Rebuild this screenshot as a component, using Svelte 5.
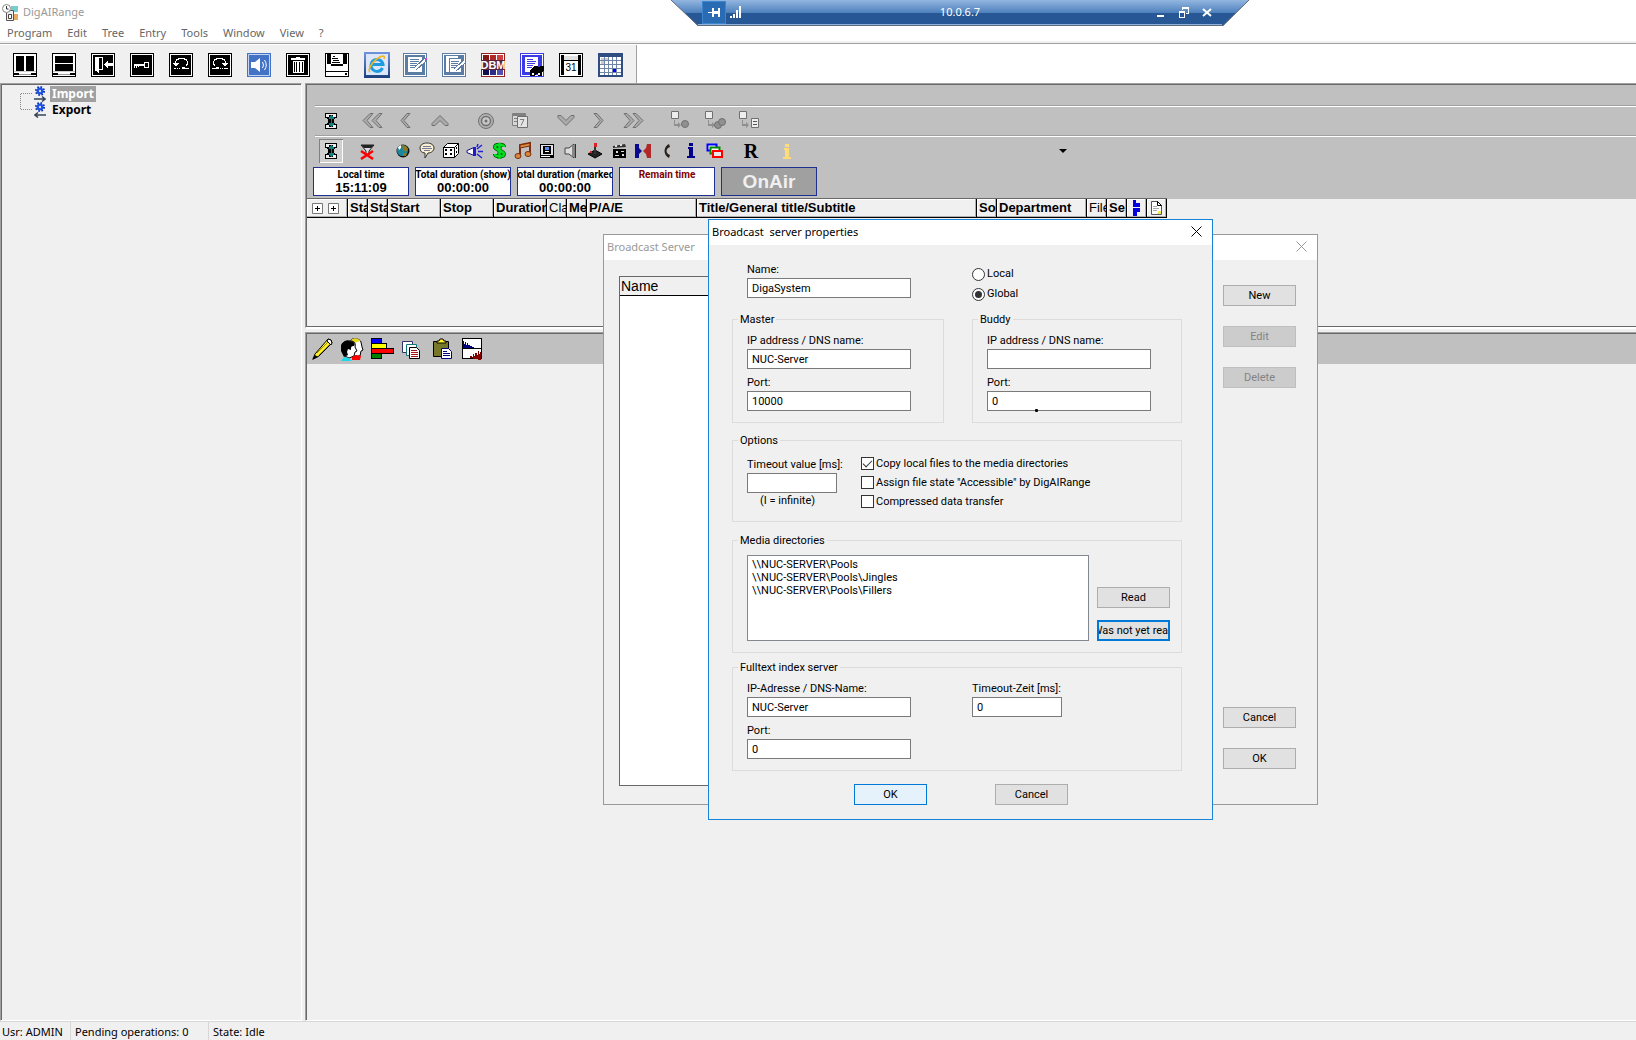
<script>
  const menus = ['Program', 'Edit', 'Tree', 'Entry', 'Tools', 'Window', 'View', '?'];

  // square tile with a thin white inner frame
  const tile = (c) => `<path d="M0 0h24v24H0z" fill="${c}"/><path d="M1.500 1.500h21v21h-21z" fill="none" stroke="#fff"/>`;

  const mainTools = [
    { name: 'Split vertical', art: '<path d="M0 0h24v24H0z"/><path d="M1 1h22v22H1z" fill="#fff"/><path d="M3 3h8v15H3zM13 3h8v15h-8zM1 20h5v2H1zM18 20h5v2h-5z"/><path d="M6 21h12v1H6z" fill="#999"/><path d="M1 18h22v1H1z" fill="#ccc"/>' },
    { name: 'Split horizontal', art: '<path d="M0 0h24v24H0z"/><path d="M1 1h22v22H1z" fill="#fff"/><path d="M3 3h18v7H3zM3 11h18v7H3zM1 20h5v2H1zM18 20h5v2h-5z"/><path d="M6 21h12v1H6z" fill="#999"/><path d="M1 18h22v1H1z" fill="#ccc"/>' },
    { name: 'Exit', art: tile('#000') + '<path d="M4 4h8v13H8v3H7v-1H6v-1H4z" fill="#fff"/><path d="M8 5h3v11H8z" fill="#000"/><path d="M13 11h1v-1h1V9h1V8h1v2h5v3h-5v2h-1v-1h-1v-1h-1v-1h-1z" fill="#fff"/>' },
    { name: 'Login', art: tile('#000') + '<path d="M4 11h10v2H9v1H8v-1H7v2H6v-2H5v2H4z" fill="#fff"/><path d="M14.500 9.500h4v5h-4z" fill="none" stroke="#fff"/>' },
    { name: 'Undo', art: tile('#000') + '<path d="M6 10V8h1V6h2V5h7v1h2v2h1v4h-1v1h-2v2h4v1h-7v-2h3v-1h1v-2h1V8h-1V7h-2V6h-5v1H8v1H7v2h3v1H9v1H8v1H6v-1H5v-1H4v-1zM5 15h2v1H5zM8 15h1v1H8zM10 15h1v1h-1z" fill="#fff"/>' },
    { name: 'Redo', art: tile('#000') + '<path d="M18 10V8h-1V6h-2V5H8v1H6v2H5v4h1v1h2v2H4v1h7v-2H8v-1H7v-2H6V8h1V7h2V6h5v1h2v1h1v2h-3v1h1v1h1v1h2v-1h1v-1h1v-1zM12 15h1v1h-1zM14 15h1v1h-1zM16 15h4v1h-4z" fill="#fff"/>' },
    { name: 'Sound', art: '<path d="M0 0h24v24H0z" fill="#4472c4"/><path d="M1.500 1.500h21v21h-21z" fill="none" stroke="#c5d5f2"/><path d="M4 9h4l5-4v14l-5-4H4z" fill="#fff"/><path d="M15.500 9q2 3 0 6M17.500 7q3.500 5 0 10" fill="none" stroke="#fff"/>' },
    { name: 'Delete', art: tile('#000') + '<path d="M10 4h4v1h5v2H5V5h5zM7 8h11v12H7z" fill="#fff"/><path d="M8 9h1v10H8zM10 9h1v10h-1zM13 9h1v10h-1zM16 9h1v10h-1z" fill="#000"/>' },
    { name: 'Archive', art: '<path d="M0 0h24v24H0z"/><path d="M1 1h22v22H1z" fill="#fff"/><path d="M2 1h4v10H2zM18 1h4v10h-4zM6 11h12v2H6zM8 3h2v1H8zM7 5h6v1H7zM8 7h6v1H8zM7 9h8v1H7zM1 18h22v1H1zM20 20h2v2h-2z"/>' },
    { name: 'Browser', art: '<defs><linearGradient id="ie" x2="0" y2="1"><stop stop-color="#6f96dc"/><stop offset="1" stop-color="#1d3f80"/></linearGradient></defs><path d="M0 0h26v26H0z" fill="url(#ie)"/><path d="M2 2h22v21H2z" fill="#dce6f8"/><path d="M18.500 16a6 6 0 1 1 .5-3.500H8" fill="none" stroke="#1e9be0" stroke-width="3"/><path d="M6 20C3 18 9 8 17 4.500c3-1 4 0 3 2.500" fill="none" stroke="#f2b51c" stroke-width="1.600"/>' },
    { name: 'Edit entry', art: tile('#5b7da3') + '<path d="M5 4h14v15H5z" fill="#fff"/><path d="M7 6h9v1H7zM7 8h9v1H7zM7 10h7v1H7zM7 12h8v1H7zM7 14h4v1H7z" fill="#5b7da3"/><path d="M12 16l11-10" stroke="#5b7da3" stroke-width="4"/><path d="M12 16l10-9" stroke="#fff" stroke-width="2"/><path d="M23 5h1v2h-1z" fill="#e040e0"/>' },
    { name: 'Edit copies', art: tile('#5b7da3') + '<path d="M4 3h12v16H4z" fill="#fff"/><path d="M7.500 5.500h12v14h-12z" fill="#fff" stroke="#5b7da3"/><path d="M9 8h8v1H9zM9 10h7v1H9zM9 12h6v1H9zM9 14h4v1H9z" fill="#5b7da3"/><path d="M13 17L23 8" stroke="#5b7da3" stroke-width="4"/><path d="M13 17L23 8" stroke="#fff" stroke-width="2"/>' },
    { name: 'Database manager', art: '<path d="M0 0h24v24H0z" fill="#962020"/><path d="M1 1h22v22H1z" fill="#fff"/><path d="M2 2h6v5H2z" fill="#821818"/><path d="M9 2h6v5H9z" fill="#b02828"/><path d="M16 2h6v5h-6z" fill="#d04040"/><path d="M2 17h6v5H2z" fill="#101050"/><path d="M9 17h6v5H9z" fill="#2c2c88"/><path d="M16 17h6v5h-6z" fill="#5050b0"/><path d="M1 7h22v10H1z" fill="#5a2438"/><text x="12" y="16" text-anchor="middle" font-family="Liberation Sans Narrow, Liberation Sans, sans-serif" font-weight="bold" font-size="11" fill="#fff">DBM</text>' },
    { name: 'Find entry', art: tile('#3c3ce6') + '<path d="M5 4h13v15H5z" fill="#fff"/><path d="M7 6h6v1H7zM7 8h9v1H7zM7 10h8v1H7zM7 12h6v1H7zM7 14h5v1H7z" fill="#3c3ce6"/><path d="M10 20v-3l3-2 1-2h3l2 1 2-1h3v4l-2 3v3h-4v-2h-2l-2 2h-4z"/><path d="M12 20h2v2h-2zM18 20h2v2h-2z" fill="#fff"/>' },
    { name: 'Calendar', art: '<path d="M0 0h24v24H0z"/><path d="M1 1h22v22H1z" fill="#fff"/><path d="M2 2h20v20H2z"/><path d="M5 2h14v20H5z" fill="#fff"/><path d="M5 3h14v4H5z" fill="#e0e0e0"/><path d="M5 7h14v1H5zM19 2h1v20h-1z"/><text x="12" y="18" text-anchor="middle" font-family="Liberation Sans, sans-serif" font-size="10">31</text>' },
    { name: 'Schedule', art: '<path d="M0 0h25v24H0z" fill="#2f4d80"/><path d="M2 4h21v18H2z" fill="#fff"/><path d="M3 5h3v2H3zM7 5h3v2H7zM3 8h3v3H3z" fill="#ccc"/><path d="M2 7.500h21M2 11.500h21M2 15.500h21M2 19.500h21M6.500 4v18M10.500 4v18M14.500 4v18M18.500 4v18" stroke="#6f85a8"/><path d="M15 16h3v3h-3z" fill="#00f"/>' }
  ];

  const column = '<path d="M6 4h12v5h-2v1h-1v4h1v1h2v5H6v-5h2v-1h1v-4H8V9H6z"/><path d="M7 5h3v3H7zM14 5h3v3h-3zM7 16h3v3H7zM14 16h3v3h-3zM10 5h4v1h-4zM10 18h4v1h-4z" fill="#eee"/><path d="M12 6h1v1h1v1h1v2h-2v4h2v2h-1v1h-1v1h-1v-1h-1v-1h-1v-2h2v-4h-2V8h1V7h1z" fill="#0a8080"/>';
  const arrow = 'fill="#ababab" stroke="#707070"';
  const linked = '<path d="M3.500 2.500h7v7h-7z" fill="#eee" stroke="#707070"/><path d="M7 11v4h3v-2l3 3-3 3v-2H6v-6z" fill="#909090"/>';

  const navGroups = [
    [
      { name: 'First', art: `<path d="M10 4.500h3l-6 7 6 7h-3l-7-7zM19 4.500h3l-6 7 6 7h-3l-7-7z" ${arrow}/>` },
      { name: 'Previous', art: `<path d="M13 4.500h3l-6 7 6 7h-3l-6-7z" ${arrow}/>` },
      { name: 'Up', art: `<path d="M12 6.500l8 8v2h-3l-5-5-5 5H4v-2z" ${arrow}/>` }
    ],
    [
      { name: 'Locate', art: '<circle cx="12" cy="12" r="7.500" fill="#b0b0b0" stroke="#707070"/><circle cx="12" cy="12" r="4.500" fill="#c8c8c8" stroke="#707070" stroke-width="1.500"/><circle cx="12" cy="12" r="1.500" fill="#707070"/>' },
      { name: 'Days', art: '<path d="M4.500 4.500h13v12h-13z" fill="#d8d8d8" stroke="#808080"/><path d="M4 5h14v2H4zM6 9h3v1H6zM6 12h3v1H6z" fill="#808080"/><path d="M9.500 7.500h10v11h-10z" fill="#e4e4e4" stroke="#707070"/><path d="M12 10.500h4l-3 6" fill="none" stroke="#808080"/>' }
    ],
    [
      { name: 'Down', art: `<path d="M12 16.500l-8-8v-2h3l5 5 5-5h3v2z" ${arrow}/>` },
      { name: 'Next', art: `<path d="M9 4.500H6l6 7-6 7h3l6-7z" ${arrow}/>` },
      { name: 'Last', art: `<path d="M14 4.500h-3l6 7-6 7h3l7-7zM5 4.500H2l6 7-6 7h3l7-7z" ${arrow}/>` }
    ],
    [
      { name: 'Link one', art: linked + '<circle cx="17" cy="15" r="3.500" fill="#909090" stroke="#707070"/>' },
      { name: 'Link many', art: linked + '<circle cx="16" cy="16" r="3.500" fill="#909090" stroke="#707070"/><circle cx="20" cy="13" r="3.500" fill="#909090" stroke="#707070"/>' },
      { name: 'Link list', art: linked + '<path d="M15.500 9.500h7v9h-7z" fill="#eee" stroke="#707070"/><path d="M17 12h4v1h-4zM17 15h4v1h-4z" fill="#555"/>' }
    ]
  ];

  const kindTools = [
    { name: 'World', art: '<circle cx="12" cy="12" r="6.500" fill="#111"/><circle cx="11.500" cy="11.500" r="5.500" fill="#1c86a0"/><path d="M11 6l4 1 2 3-2 3-3-2zM12 14l4 0-1 3h-3z" fill="#8a7a20"/><path d="M7 8l3-2v3l-2 2z" fill="#fff"/>' },
    { name: 'Speech', art: '<path d="M12 4c4 0 7 2 7 5s-3 5-6 5l-3 5v-5c-3 0-5-2-5-5s3-5 7-5z" fill="#f8f0d0" stroke="#333"/><path d="M8 7.500h8M7 9.500h10M9 11.500h6" stroke="#777799"/>' },
    { name: 'Random', art: '<path d="M4.500 8.500l4-4h11v10l-4 4h-11z" fill="#fff" stroke="#000"/><path d="M4 8.500h11.500v10M15.500 8.500l4-4" fill="none" stroke="#000"/><path d="M6 10h2v2H6zM11 10h2v2h-2zM6 14h2v2H6zM11 14h2v2h-2zM17 8h1v2h-1zM17 12h1v2h-1z"/>' },
    { name: 'Jingle', art: '<path d="M4 11.500l7-3v8l-7-3z" fill="#fff" stroke="#111188"/><path d="M10 8h3v9h-3z" fill="#1c1ccc"/><path d="M14 10l5-4M15 12.500h5M14 15l5 4M14 8l1-3" stroke="#2222dd" stroke-width="1.500"/>' },
    { name: 'Commercial', art: '<path d="M17 8c0-3-9-3-9 0s9 4 9 7-9 3-9 0M12.500 4v16" fill="none" stroke="#064d06" stroke-width="4"/><path d="M17 8c0-3-9-3-9 0s9 4 9 7-9 3-9 0M12.500 4v16" fill="none" stroke="#00e020" stroke-width="2.500"/>' },
    { name: 'Music', art: '<path d="M9 16V6l10-2v10" fill="none" stroke="#7c2c10" stroke-width="2"/><path d="M9 6l10-2v3L9 9z" fill="#d88838" stroke="#7c2c10"/><ellipse cx="7" cy="17" rx="3" ry="2.500" fill="#d88838" stroke="#7c2c10"/><ellipse cx="17" cy="15" rx="3" ry="2.500" fill="#d88838" stroke="#7c2c10"/>' },
    { name: 'Video', art: '<path d="M5 5h14v14H5z"/><path d="M6 6h12v10H6z" fill="#e4e4e4"/><path d="M8 7h8v8H8z"/><path d="M10 8h4v3h-4z" fill="#5a8af0"/><path d="M10 12h4v1h-4zM6 17h9v1H6z" fill="#fff"/>' },
    { name: 'Speaker', art: '<path d="M6 9h4l5-4v14l-5-4H6z" fill="#ddd" stroke="#444"/><path d="M13 7h2v10h-2z" fill="#888"/><path d="M16.500 5v14" stroke="#333"/>' },
    { name: 'Game', art: '<path d="M12 11l7 4-7 4-7-4z" fill="#222" stroke="#000"/><path d="M12 6v9" stroke="#333" stroke-width="2"/><path d="M11 4h3v4h-3zM7 12h2v2H7z" fill="#d22"/>' },
    { name: 'Film', art: '<path d="M6 10h13v9H6z"/><path d="M6 7l12-2 1 3-13 1z" fill="#333"/><path d="M8 6h2v2H8zM13 5h2v2h-2zM9 12h2v2H9zM14 12h3v1h-3zM8 16h4v1H8zM15 15h2v2h-2z" fill="#ddd"/>' },
    { name: 'Dialog', art: '<path d="M4 5h4v4l3 3-3 3v4H4z" fill="#0a0a90"/><path d="M20 5v14h-4l-1-4-3-3 3-3 1-4z" fill="#b02828"/>' },
    { name: 'Phone', art: '<path d="M14 5c-6 3-6 11 0 14l1-3-2-1c-2-2-2-4 0-6l2-1z" fill="#2a2018"/>' },
    { name: 'Info', art: '<path d="M9 8h5v9h2v2H8v-2h2v-7H9zM10 4h4v3h-4z" fill="#00008b"/>' },
    { name: 'Windows', art: '<path d="M4.500 5.500h9v6h-9z" fill="#fff" stroke="#00f" stroke-width="2"/><path d="M7.500 8.500h9v6h-9z" fill="#fff" stroke="#080" stroke-width="2"/><path d="M10 12h9v6h-9z" fill="#e8e8e8" stroke="#f00" stroke-width="2"/>' }
  ];

  const clocks = [
    { label: 'Local time', value: '15:11:09' },
    { label: 'Total duration (show)', value: '00:00:00' },
    { label: 'Total duration (marked)', value: '00:00:00' },
    { label: 'Remain time', value: '', red: true }
  ];

  const columns = [
    { text: 'Sta', w: 20 },
    { text: 'Sta', w: 20 },
    { text: 'Start', w: 53 },
    { text: 'Stop', w: 53 },
    { text: 'Duration', w: 53 },
    { text: 'Cla', w: 20, thin: true },
    { text: 'Me', w: 20 },
    { text: 'P/A/E', w: 110 },
    { text: 'Title/General title/Subtitle', w: 280 },
    { text: 'So', w: 20 },
    { text: 'Department', w: 90 },
    { text: 'File', w: 20, thin: true },
    { text: 'Se', w: 20 }
  ];

  const lowerTools = [
    { name: 'Pencil', art: '<path d="M2 22l2-5L17 2l3 1 1 3L8 19z" fill="#ffee30" stroke="#000"/><path d="M16 4l4 4 1-2-1-3-3-1z" fill="#fff" stroke="#000"/><path d="M6 16L17 5M8 18L19 7" stroke="#a09000"/><path d="M1 23l3-5 3 2z"/>' },
    { name: 'Speakers', art: '<path d="M10 3c3-3 9-1 10 2l1 5 1 3-2 1-1 5h-7z" fill="#fff" stroke="#000"/><path d="M10 3c3-3 8-2 9 1l-8 3z" fill="#e8d820"/><path d="M1 12C0 6 4 3 9 4c5 0 6 3 5 6l2 4-2 1-1 4-5 2-4-2z" fill="#fff" stroke="#000"/><path d="M0 14C-2 7 3 3 8 4c5 0 7 3 5 5-3 0-3 1-3 4l-3-1-1 3 1 3-4 2z"/><path d="M11 20l4-2 5 1-1 4h-8z" fill="#f00"/><path d="M3 20l5 1 3 3H0z" fill="#20d8e8"/>' },
    { name: 'Bars', art: '<path d="M0.500 1.500h10v5h-10z" fill="#00f" stroke="#000"/><path d="M0.500 6.500h15v5h-15z" fill="#ff0" stroke="#000"/><path d="M0.500 11.500h22v5h-22z" fill="#f00" stroke="#000"/><path d="M0.500 16.500h10v5h-10z" fill="#008000" stroke="#000"/>' },
    { name: 'Texts', art: '<path d="M1.500 4.500h10v11h-10z" fill="#fff" stroke="#336"/><path d="M5.500 7.500h10v11h-10z" fill="#fff" stroke="#177"/><path d="M8.500 10.500h7l3 3v8h-10z" fill="#fff" stroke="#000"/><path d="M10 13.500h6M10 15.500h7M10 17.500h7M10 19.500h7" stroke="#a01818"/>' },
    { name: 'Paste', art: '<path d="M2.500 4.500h15v15h-15z" fill="#77772a" stroke="#000"/><path d="M6 6V4h2l1-2h3l1 2h2v2z" fill="#ffee30" stroke="#000"/><path d="M10.500 11.500h7l3 3v7h-10z" fill="#fff" stroke="#000080"/><path d="M12 14.500h4M12 16.500h7M12 18.500h7" stroke="#000080"/>' },
    { name: 'Levels', art: '<path d="M1.500 1.500h19v20h-19z" fill="#fff" stroke="#000"/><path d="M1 11.500h20" stroke="#000"/><path d="M2 11V4h1v3h1V5h1v3h1V6h1v2h2v1h2v1h2v1z" fill="#000080"/><path d="M9 21v-2h2v1h1v-3h1v2h1v-3h2v2h1v-4h1v3h1v-2h1v8z" fill="#800000"/>' }
  ];

  const directories = ['\\\\NUC-SERVER\\Pools', '\\\\NUC-SERVER\\Pools\\Jingles', '\\\\NUC-SERVER\\Pools\\Fillers'];
  let scope = 'global';
</script>

{#snippet icon(art, w, crisp)}
  <svg width={w} height={w === 26 ? 26 : 24} viewBox="0 0 {w} {w === 26 ? 26 : 24}" shape-rendering={crisp ? 'crispEdges' : 'auto'} aria-hidden="true">{@html art}</svg>
{/snippet}

{#snippet cross()}
  <svg width="11" height="11" viewBox="0 0 11 11" aria-hidden="true"><path d="M0.500 0.500l10 10M10.500 0.500l-10 10" stroke="currentColor" fill="none" /></svg>
{/snippet}

{#snippet field(id, label, value)}
  <div class="field">
    <label for={id}>{label}</label>
    <input {id} type="text" {value} />
  </div>
{/snippet}

<div class="app">
  <header class="titlebar">
    <svg width="17" height="17" viewBox="0 0 17 17" aria-hidden="true">
      <path d="M9 2h7v6H9z" fill="#7cc" /><path d="M9 10h7v6H9z" fill="#e8a860" />
      <path d="M4.500 6.500h7v10h-7z" fill="#eee" stroke="#555" /><path d="M6.500 10.500h3v4h-3z" fill="#fff" stroke="#444" />
      <circle cx="4.500" cy="4.500" r="4" fill="#fff" stroke="#888" /><path d="M4.500 2v3h2" fill="none" stroke="#333" />
    </svg>
    <span>DigAIRange</span>
  </header>

  <nav class="menubar">
    {#each menus as item}
      <button type="button">{item}</button>
    {/each}
  </nav>

  <div class="toolbar-row">
    <div class="main-tools">
      {#each mainTools as tool}
        {#if tool.name === 'Browser'}
          <button class="big" type="button" aria-label={tool.name}>{@render icon(tool.art, 26, false)}</button>
        {:else}
          <button type="button" aria-label={tool.name}>{@render icon(tool.art, tool.name === 'Schedule' ? 25 : 24, tool.name !== 'Sound')}</button>
        {/if}
      {/each}
    </div>
  </div>

  <div class="work">
    <aside class="tree">
      <svg class="branch" width="12" height="18" viewBox="0 0 12 18" aria-hidden="true">
        <path d="M12 0.500H0.500v16H12" fill="none" stroke="#888" stroke-dasharray="1 1" />
      </svg>
      <ul>
        {#each ['Import', 'Export'] as node, i}
          <li>
            <svg width="12" height="16" viewBox="0 0 12 16" aria-hidden="true">
              <circle cx="6" cy="5" r="4" fill="none" stroke="#0a2fb0" stroke-width="2" stroke-dasharray="1.570 1.570" />
              <circle cx="6" cy="5" r="3.500" fill="#1c50e0" />
              <circle cx="6" cy="5" r="1.200" fill="#cde" />
              {#if i === 0}
                <path d="M0 13h10M8 10.500l3 2.500-3 2.500" fill="none" stroke="#345" stroke-width="1.500" />
              {:else}
                <path d="M2 13h10M4 10.500L1 13l3 2.500" fill="none" stroke="#345" stroke-width="1.500" />
              {/if}
            </svg>
            <span class:selected={i === 0}>{node}</span>
          </li>
        {/each}
      </ul>
    </aside>

    <main class="right">
      <section class="show">
        <div class="band"></div>
        <div class="strip">
          <button class="tool" type="button" aria-label="Columns">{@render icon(column, 24, true)}</button>
          {#each navGroups as group}
            <div class="nav-group">
              {#each group as tool}
                <button type="button" aria-label={tool.name}>{@render icon(tool.art, 24, false)}</button>
              {/each}
            </div>
          {/each}
        </div>
        <div class="strip">
          <button class="tool pressed" type="button" aria-label="Columns">{@render icon(column, 24, true)}</button>
          <button class="tool" type="button" aria-label="Clear filter">
            {@render icon('<path d="M6 6h13l-5 6v4h-3v-4z" fill="#ddd" stroke="#222"/><path d="M6 6h13l-3 3H9z" fill="#222"/><path d="M6 12l12 8M18 12L6 20" stroke="#f00" stroke-width="2.500"/>', 24, false)}
          </button>
          <div class="kind-group">
            {#each kindTools as tool}
              <button class="tool" type="button" aria-label={tool.name}>{@render icon(tool.art, 24, false)}</button>
            {/each}
          </div>
          <button class="tool letter" type="button">R</button>
          <button class="tool" type="button" aria-label="Hint">
            {@render icon('<path d="M9 9h5v9h2v2H8v-2h2v-7H9zM10 5h4v3h-4z" fill="#ffdc78"/>', 24, true)}
          </button>
          <button class="drop" type="button" aria-label="Filter list">
            <svg width="8" height="4" viewBox="0 0 8 4" aria-hidden="true"><path d="M0 0h8L4 4z" /></svg>
          </button>
        </div>
        <div class="clocks">
          {#each clocks as clock}
            <div class="clock" class:red={clock.red}>
              <small>{clock.label}</small>
              <strong>{clock.value}</strong>
            </div>
          {/each}
          <div class="clock onair">OnAir</div>
        </div>
        <table class="columns">
          <thead>
            <tr>
              <th class="plus" style="width: 41px">
                <div>
                  {#each [0, 1] as n}
                    <svg width="11" height="11" viewBox="0 0 11 11" aria-hidden="true"><path d="M0.500 0.500h10v10h-10z" fill="#fff" stroke="#777" /><path d="M3 5.500h5M5.500 3v5" stroke="#000" /></svg>
                  {/each}
                </div>
              </th>
              {#each columns as col}
                <th class:thin={col.thin} style="width: {col.w}px"><div>{col.text}</div></th>
              {/each}
              <th style="width: 20px">
                <div>
                  <svg width="16" height="17" viewBox="0 0 16 17" shape-rendering="crispEdges" aria-hidden="true"><path d="M4 1h3v3h4v4H4zM4 9h7v4H8v4H4z" fill="#0000e0" /></svg>
                </div>
              </th>
              <th style="width: 20px">
                <div>
                  <svg width="16" height="17" viewBox="0 0 16 17" aria-hidden="true"><path d="M2.500 2.500h6l4 4v9h-10z" fill="#fff" stroke="#555" /><path d="M8.500 2.500v4h4z" fill="#fff" stroke="#000" /><path d="M4 7.500h4M4 9.500h6M4 11.500h4" stroke="#aaa" /><path d="M9 12h3v3H8v-1h1z" fill="#f0e860" /></svg>
                </div>
              </th>
            </tr>
          </thead>
        </table>
      </section>

      <section class="editor">
        <div class="editor-tools">
          {#each lowerTools as tool}
            <button type="button" aria-label={tool.name}>{@render icon(tool.art, 24, tool.name === 'Bars' || tool.name === 'Levels')}</button>
          {/each}
        </div>
      </section>
    </main>
  </div>

  <footer class="status">
    <span class="user">Usr: ADMIN</span>
    <span class="pending">Pending operations: 0</span>
    <span>State: Idle</span>
  </footer>

  <!-- connection bar of the remote session -->
  <div class="remote">
    <svg class="remote-shape" width="578" height="28" viewBox="0 0 578 28" aria-hidden="true">
      <defs>
        <linearGradient id="bar" x1="0" y1="0" x2="0" y2="1">
          <stop offset="0" stop-color="#93b6e0" />
          <stop offset="0.500" stop-color="#4d80bc" />
          <stop offset="0.500" stop-color="#285796" />
          <stop offset="1" stop-color="#285796" />
        </linearGradient>
      </defs>
      <path d="M0 0h578l-26 26H27z" fill="url(#bar)" />
      <path d="M0 0l27 25.500h525L578 0" fill="none" stroke="#5c6a7c" />
      <path d="M27 24.500h524" stroke="#8fb2dc" />
    </svg>
    <div class="remote-row">
      <div class="remote-left">
        <button class="pin" type="button" aria-label="Pin">
          <svg width="12" height="11" viewBox="0 0 12 11" shape-rendering="crispEdges" aria-hidden="true"><path d="M0 5h4V1h2v3h4V1h2v9h-2V7H6v3H4V6H0z" fill="#fff" /></svg>
        </button>
        <svg width="12" height="12" viewBox="0 0 12 12" shape-rendering="crispEdges" aria-hidden="true"><path d="M0 10h2v2H0zM3 8h2v4H3zM6 4h2v8H6zM9 0h2v12H9z" fill="#fff" /></svg>
      </div>
      <span>10.0.6.7</span>
      <div class="remote-right">
        <button type="button" aria-label="Minimize"><svg width="10" height="11" viewBox="0 0 10 11" aria-hidden="true"><path d="M1 8h7v2H1z" fill="#fff" /></svg></button>
        <button type="button" aria-label="Restore"><svg width="10" height="11" viewBox="0 0 10 11" shape-rendering="crispEdges" aria-hidden="true"><path d="M3 0h7v7H7V6h2V2H4v1H3zM0 4h6v7H0zM1 6v4h4V6z" fill="#fff" fill-rule="evenodd" /></svg></button>
        <button type="button" aria-label="Close"><svg width="10" height="11" viewBox="0 0 10 11" aria-hidden="true"><path d="M1 2l8 7M9 2L1 9" stroke="#fff" stroke-width="2" /></svg></button>
      </div>
    </div>
  </div>

  <div class="window servers" role="dialog" aria-label="Broadcast Server">
    <div class="caption">
      <span>Broadcast Server</span>
      <button type="button" aria-label="Close servers">{@render cross()}</button>
    </div>
    <div class="servers-body">
      <div class="server-list">
        <div class="list-head">Name</div>
      </div>
      <div class="server-actions">
        <button class="btn" type="button">New</button>
        <button class="btn" type="button" disabled>Edit</button>
        <button class="btn" type="button" disabled>Delete</button>
        <div class="fill"></div>
        <button class="btn" type="button">Cancel</button>
        <button class="btn" type="button">OK</button>
      </div>
    </div>
  </div>

  <div class="window props" role="dialog" aria-label="Broadcast server properties">
    <div class="caption">
      <span>Broadcast&nbsp; server properties</span>
      <button type="button" aria-label="Close properties">{@render cross()}</button>
    </div>
    <form class="props-body" on:submit|preventDefault>
      <div class="top-row">
        {@render field('name', 'Name:', 'DigaSystem')}
        <div class="radios">
          <label><input type="radio" name="scope" value="local" bind:group={scope} />Local</label>
          <label><input type="radio" name="scope" value="global" bind:group={scope} />Global</label>
        </div>
      </div>

      <div class="pair">
        <fieldset class="master">
          <legend>Master</legend>
          <div class="stack">
            {@render field('master-ip', 'IP address / DNS name:', 'NUC-Server')}
            {@render field('master-port', 'Port:', '10000')}
          </div>
        </fieldset>
        <fieldset class="buddy">
          <legend>Buddy</legend>
          <div class="stack">
            {@render field('buddy-ip', 'IP address / DNS name:', '')}
            {@render field('buddy-port', 'Port:', '0')}
          </div>
          <i class="pointer"></i>
        </fieldset>
      </div>

      <fieldset class="options">
        <legend>Options</legend>
        <div class="options-row">
          <div class="timeout">
            {@render field('timeout', 'Timeout value [ms]:', '')}
            <p>(I = infinite)</p>
          </div>
          <div class="checks">
            <label><input type="checkbox" checked />Copy local files to the media directories</label>
            <label><input type="checkbox" />Assign file state "Accessible" by DigAIRange</label>
            <label><input type="checkbox" />Compressed data transfer</label>
          </div>
        </div>
      </fieldset>

      <fieldset class="media">
        <legend>Media directories</legend>
        <div class="media-row">
          <ul class="dirs">
            {#each directories as dir}
              <li>{dir}</li>
            {/each}
          </ul>
          <div class="media-actions">
            <button class="btn" type="button">Read</button>
            <button class="btn focus" type="button"><span>Was not yet read</span></button>
          </div>
        </div>
      </fieldset>

      <fieldset class="fulltext">
        <legend>Fulltext index server</legend>
        <div class="fulltext-row">
          <div class="stack">
            {@render field('index-ip', 'IP-Adresse / DNS-Name:', 'NUC-Server')}
            {@render field('index-port', 'Port:', '0')}
          </div>
          <div class="short">
            {@render field('index-timeout', 'Timeout-Zeit [ms]:', '0')}
          </div>
        </div>
      </fieldset>

      <div class="confirm">
        <button class="btn default" type="submit">OK</button>
        <button class="btn" type="button">Cancel</button>
      </div>
    </form>
  </div>
</div>

<style>
  :global(body) {
    margin: 0;
    background: #f0f0f0;
  }

  .app {
    position: relative;
    display: flex;
    flex-direction: column;
    min-height: 100vh;
    overflow: hidden;
    color: #000;
    background: #f0f0f0;
    font: 11px/14px "Noto Sans", "Open Sans", sans-serif;
  }

  button {
    padding: 0;
    border: 0;
    background: none;
    color: inherit;
    font: inherit;
  }

  svg {
    display: block;
    flex: none;
  }

  ul {
    margin: 0;
    padding: 0;
    list-style: none;
  }

  /* title and menu */
  .titlebar {
    display: flex;
    align-items: center;
    gap: 4px;
    height: 24px;
    padding-left: 2px;
    color: #999;
    background: #fff;
  }

  .menubar {
    display: flex;
    gap: 15px;
    height: 17px;
    padding-left: 7px;
    color: #666;
    background: #fff;
    border-bottom: 2px solid #f0f0f0;
  }

  .toolbar-row {
    display: flex;
    height: 39px;
    background: #fff;
    border-top: 1px solid #a0a0a0;
  }

  .main-tools {
    display: flex;
    align-items: flex-start;
    gap: 15px;
    padding: 8px 13px 0;
    margin-top: 1px;
    background: #f0f0f0;
    border-right: 1px solid #a0a0a0;
  }

  .big {
    margin: -1px -2px -1px 0;
  }

  /* work area */
  .work {
    display: flex;
    flex: 1;
    gap: 3px;
  }

  .tree {
    position: relative;
    display: flex;
    box-sizing: border-box;
    width: 302px;
    padding: 2px 0 0 19px;
    border: 1px solid #a0a0a0;
    border-right-color: #fff;
    border-bottom-color: #fff;
    box-shadow: inset 1px 1px #696969;
    gap: 2px;
  }

  .branch {
    margin-top: 7px;
  }

  .tree li {
    display: flex;
    gap: 4px;
    height: 16px;
    font: bold 12px/16px "Noto Sans", "Open Sans", sans-serif;
  }

  .tree li span {
    padding: 0 2px;
  }

  .tree .selected {
    color: #fff;
    background: #a0a0a0;
  }

  .right {
    display: flex;
    flex: 1;
    flex-direction: column;
    gap: 3px;
    min-width: 0;
  }

  .show,
  .editor {
    border: 1px solid #a0a0a0;
    border-right: 0;
    border-bottom-color: #fff;
    box-shadow: inset 1px 1px #696969;
    padding: 1px 0 0 1px;
  }

  .show {
    box-sizing: border-box;
    height: 246px;
    border-bottom: 2px solid #fff;
    box-shadow: inset 1px 1px #696969, inset 0 -1px #696969;
    background: linear-gradient(#c0c0c0, #c0c0c0) 1px 1px / 100% 114px no-repeat;
  }

  .editor {
    flex: 1;
  }

  .band {
    height: 20px;
  }

  .strip {
    display: flex;
    align-items: center;
    gap: 12px;
    height: 29px;
    margin-left: 8px;
    padding-left: 4px;
    border-top: 1px solid #a0a0a0;
    box-shadow: inset 0 1px #fff;
  }

  .tool {
    width: 24px;
    height: 24px;
  }

  .pressed {
    background: #d0d0d0;
    box-shadow: inset 1px 1px #808080, inset -1px -1px #fff;
  }

  .nav-group,
  .kind-group {
    display: flex;
  }

  .nav-group button {
    display: flex;
    justify-content: center;
    width: 34px;
  }

  .letter {
    font: bold 20px/24px "Liberation Serif", serif;
  }

  .drop {
    padding: 8px;
    margin-left: 240px;
  }

  .clocks {
    display: flex;
    gap: 6px;
    padding: 2px 0 2px 6px;
  }

  .clock {
    display: flex;
    flex-direction: column;
    align-items: center;
    box-sizing: border-box;
    width: 96px;
    height: 29px;
    overflow: hidden;
    border: 1px solid #1f2f8f;
    background: #fff;
    font-family: "Liberation Sans", Arial, sans-serif;
    white-space: nowrap;
  }

  .clock small {
    font: bold 10px/13px Roboto, sans-serif;
  }

  .clock strong {
    font-size: 13px;
    line-height: 13px;
  }

  .red {
    color: #800000;
  }

  .onair {
    justify-content: center;
    color: #f0f0f0;
    background: #a0a0a0;
    font-size: 19px;
    font-weight: bold;
  }

  .columns {
    width: 860px;
    table-layout: fixed;
    border-collapse: separate;
    border-spacing: 0;
    border-top: 1px solid #696969;
    border-bottom: 1px solid #000;
  }

  .columns th {
    box-sizing: border-box;
    padding: 0;
    overflow: hidden;
    border-right: 1px solid #000;
    background: #f0f0f0;
    box-shadow: inset -1px -1px #b0b0b0, inset 1px 1px #fff;
    font: bold 13px/18px "Liberation Sans", Arial, sans-serif;
    text-align: left;
    white-space: nowrap;
  }

  .columns th div {
    height: 18px;
    padding-left: 2px;
    overflow: hidden;
  }

  .columns .thin {
    font-weight: normal;
  }

  .columns .plus div {
    display: flex;
    align-items: center;
    gap: 5px;
    padding-left: 5px;
  }

  .editor-tools {
    display: flex;
    align-items: center;
    gap: 6px;
    height: 30px;
    padding-left: 4px;
    background: #c0c0c0;
  }

  /* status bar */
  .status {
    display: flex;
    height: 18px;
    padding: 0 2px;
    border-top: 1px solid #d7d7d7;
    line-height: 20px;
  }

  .status .user,
  .status .pending {
    margin-right: 4px;
    border-right: 1px solid #d7d7d7;
  }

  .status .user {
    width: 68px;
  }

  .status .pending {
    width: 133px;
  }

  /* remote session bar */
  .remote {
    position: absolute;
    top: 0;
    left: 671px;
    width: 578px;
    color: #fff;
  }

  .remote-shape {
    position: absolute;
    top: 0;
    left: 0;
  }

  .remote-row {
    position: relative;
    display: grid;
    grid-template-columns: 1fr auto 1fr;
    align-items: center;
    height: 24px;
    padding: 0 31px;
  }

  .remote-left,
  .remote-right {
    display: flex;
    align-items: center;
    gap: 4px;
  }

  .remote-right {
    justify-content: flex-end;
    gap: 13px;
    padding-right: 6px;
  }

  .pin {
    padding: 5px;
    border: 1px solid #3b86cf;
    background: #2a6cb4;
  }

  /* windows */
  .window {
    position: absolute;
    box-sizing: border-box;
    background: #f0f0f0;
    border: 1px solid #999;
    font: 11px/14px Roboto, "Open Sans", sans-serif;
  }

  .servers {
    top: 234px;
    left: 603px;
    width: 715px;
  }

  .props {
    top: 219px;
    left: 708px;
    width: 505px;
    border-color: #1883d7;
  }

  .caption {
    display: flex;
    align-items: center;
    justify-content: space-between;
    box-sizing: border-box;
    height: 25px;
    padding: 0 10px 2px 3px;
    background: #fff;
    font-family: "Noto Sans", "Open Sans", sans-serif;
  }

  .servers .caption {
    color: #999;
  }

  .btn {
    box-sizing: border-box;
    flex: none;
    width: 73px;
    height: 21px;
    overflow: hidden;
    border: 1px solid #adadad;
    background: #e1e1e1;
    white-space: nowrap;
  }

  .btn:disabled {
    color: #838383;
    border-color: #bfbfbf;
    background: #ccc;
  }

  .btn.focus {
    display: flex;
    align-items: center;
    justify-content: center;
    border: 2px solid #0078d7;
  }

  .btn.default {
    border-color: #0078d7;
    background: #e5f1fb;
  }

  .servers-body {
    display: flex;
    justify-content: space-between;
    padding: 16px 21px 18px 15px;
  }

  .server-list {
    box-sizing: border-box;
    width: 500px;
    height: 510px;
    border: 1px solid #696969;
    background: #fff;
  }

  .list-head {
    height: 18px;
    padding-left: 1px;
    border-bottom: 1px solid #000;
    background: #f0f0f0;
    font: 14px/19px "Liberation Sans", Arial, sans-serif;
  }

  .server-actions {
    display: flex;
    flex-direction: column;
    gap: 20px;
    padding: 9px 0 17px;
  }

  .fill {
    flex: 1;
  }

  .props-body {
    padding: 17px 30px 14px 23px;
  }

  .field {
    display: flex;
    flex-direction: column;
    line-height: 16px;
    white-space: nowrap;
  }

  .field input {
    box-sizing: border-box;
    width: 164px;
    height: 20px;
    padding: 0 4px;
    border: 1px solid #7a7a7a;
    background: #fff;
    color: #000;
    font: inherit;
  }

  .timeout .field input,
  .short .field input {
    width: 90px;
  }

  .stack {
    display: flex;
    flex-direction: column;
    gap: 6px;
  }

  .top-row {
    display: flex;
    gap: 61px;
    height: 51px;
    padding-left: 15px;
  }

  .radios {
    padding-top: 2px;
  }

  .radios label,
  .checks label {
    display: flex;
    align-items: center;
    gap: 2px;
    height: 20px;
  }

  .checks {
    display: flex;
    flex-direction: column;
    justify-content: space-between;
  }

  .checks label {
    height: 13px;
  }

  input[type="radio"],
  input[type="checkbox"] {
    appearance: none;
    display: grid;
    place-content: center;
    box-sizing: border-box;
    width: 13px;
    height: 13px;
    margin: 0;
    border: 1px solid #333;
    background: #fff;
  }

  input[type="radio"] {
    border-radius: 50%;
  }

  input[type="radio"]:checked::before {
    content: "";
    width: 7px;
    height: 7px;
    border-radius: 50%;
    background: #333;
  }

  input[type="checkbox"]:checked::before {
    content: "";
    width: 9px;
    height: 5px;
    margin-bottom: 3px;
    border: solid #333;
    border-width: 0 0 1px 1px;
    box-sizing: border-box;
    transform: rotate(-45deg);
  }

  fieldset {
    min-width: 0;
    margin: 0;
    padding: 7px 11px 11px 14px;
    border: 1px solid #dcdcdc;
  }

  legend {
    margin-left: -9px;
    padding: 0 2px;
    line-height: 13px;
  }

  .pair {
    display: flex;
    justify-content: space-between;
  }

  .master {
    box-sizing: border-box;
    width: 212px;
  }

  .buddy {
    position: relative;
    box-sizing: border-box;
    width: 210px;
  }

  .pointer {
    position: absolute;
    right: 143px;
    bottom: 10px;
    width: 3px;
    height: 3px;
    border-radius: 1px;
    background: #000;
  }

  .options {
    margin-top: 11px;
    padding-top: 10px;
    padding-bottom: 13px;
  }

  .options-row {
    display: flex;
    gap: 20px;
  }

  .timeout {
    width: 94px;
  }

  .timeout p {
    margin: 1px 0 0 13px;
  }

  .media {
    margin-top: 12px;
    padding-top: 8px;
  }

  .media-row {
    display: flex;
    justify-content: space-between;
  }

  .dirs {
    box-sizing: border-box;
    width: 342px;
    height: 86px;
    padding: 2px 4px;
    border: 1px solid #828790;
    background: #fff;
    line-height: 13px;
  }

  .media-actions {
    display: flex;
    flex-direction: column;
    justify-content: flex-end;
    gap: 12px;
  }

  .fulltext {
    margin-top: 8px;
  }

  .fulltext-row {
    display: flex;
    gap: 61px;
  }

  .confirm {
    display: flex;
    gap: 68px;
    padding: 13px 0 0 122px;
  }
</style>
